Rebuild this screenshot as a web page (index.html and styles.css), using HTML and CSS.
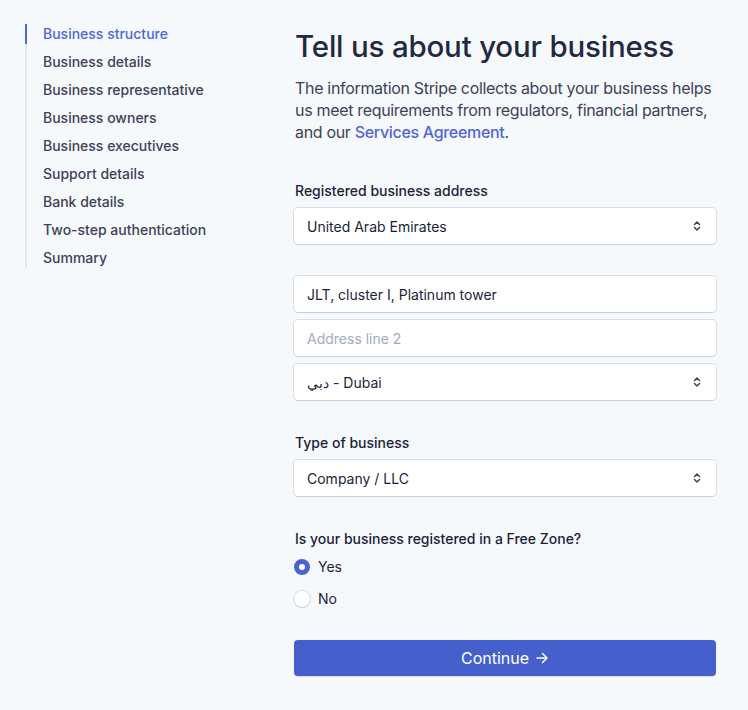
FILE: index.html
```html
<!DOCTYPE html>
<html>
<head>
<meta charset="utf-8">
<link rel="stylesheet" href="styles.css">
</head>
<body>
<div class="page">
  <nav class="steps">
    <a class="step active">Business structure</a>
    <a class="step">Business details</a>
    <a class="step">Business representative</a>
    <a class="step">Business owners</a>
    <a class="step">Business executives</a>
    <a class="step">Support details</a>
    <a class="step">Bank details</a>
    <a class="step">Two-step authentication</a>
    <a class="step">Summary</a>
  </nav>
  <main class="form">
    <h1 class="title">Tell us about your business</h1>
    <p class="intro">The information Stripe collects about your business helps us meet requirements from regulators, financial partners, and our <a class="link">Services Agreement</a>.</p>

    <div class="field">
      <div class="label">Registered business address</div>
      <div class="control select"><span>United Arab Emirates</span><svg class="chev" width="10" height="14" viewBox="0 0 10 14"><path d="M2.5 5.5 L5 3 L7.5 5.5 M2.5 8.5 L5 11 L7.5 8.5" fill="none" stroke="#3c4257" stroke-width="1.5" stroke-linecap="round" stroke-linejoin="round"/></svg></div>
    </div>

    <div class="address">
      <div class="control"><span>JLT, cluster I, Platinum tower</span></div>
      <div class="control"><span class="placeholder">Address line 2</span></div>
      <div class="control select"><span>دبي - Dubai</span><svg class="chev" width="10" height="14" viewBox="0 0 10 14"><path d="M2.5 5.5 L5 3 L7.5 5.5 M2.5 8.5 L5 11 L7.5 8.5" fill="none" stroke="#3c4257" stroke-width="1.5" stroke-linecap="round" stroke-linejoin="round"/></svg></div>
    </div>

    <div class="field type">
      <div class="label">Type of business</div>
      <div class="control select"><span>Company / LLC</span><svg class="chev" width="10" height="14" viewBox="0 0 10 14"><path d="M2.5 5.5 L5 3 L7.5 5.5 M2.5 8.5 L5 11 L7.5 8.5" fill="none" stroke="#3c4257" stroke-width="1.5" stroke-linecap="round" stroke-linejoin="round"/></svg></div>
    </div>

    <div class="field zone">
      <div class="label">Is your business registered in a Free Zone?</div>
      <div class="radios">
        <label class="radio"><span class="dot checked"></span>Yes</label>
        <label class="radio"><span class="dot"></span>No</label>
      </div>
    </div>

    <button class="continue">Continue <svg width="14" height="14" viewBox="0 0 14 14"><path d="M2 7 H12 M7.5 2.5 L12 7 L7.5 11.5" fill="none" stroke="#fff" stroke-width="1.5" stroke-linecap="round" stroke-linejoin="round"/></svg></button>
  </main>
</div>
</body>
</html>
```
FILE: styles.css
```css
* { box-sizing: border-box; }
html, body { margin: 0; padding: 0; }
body {
  background: #f6f9fc;
  font-family: Inter, "Noto Sans", sans-serif;
  color: #1a1f36;
  width: 748px;
  height: 710px;
  overflow: hidden;
}
.page {
  display: flex;
  padding: 24px 0 0 25px;
}
.steps {
  width: 269px;
  flex: none;
  display: flex;
  flex-direction: column;
  align-self: flex-start;
  border-left: 2px solid #e3e8ee;
}
.step {
  display: block;
  font-size: 14px;
  line-height: 20px;
  padding: 0 0 8px 16px;
  color: #3c4257;
  font-weight: 500;
  margin-left: -2px;
  border-left: 2px solid transparent;
}
.step:last-child { padding-bottom: 0; }
.step.active {
  color: #4f66d6;
  border-left-color: #4f66d6;
  height: 20px;
  padding-bottom: 0;
  margin-bottom: 8px;
}
.form {
  width: 422px;
  display: flex;
  flex-direction: column;
}
.title {
  margin: 4px 0 0 1px;
  font-size: 29.5px;
  line-height: 36px;
  font-weight: 500;
  color: #232940;
  letter-spacing: -0.2px;
}
.intro {
  margin: 13px 0 0 1px;
  font-size: 16px;
  line-height: 22px;
  color: #3c4257;
  letter-spacing: -0.32px;
}
.link { color: #4f66d6; font-weight: 500; }
.field { display: flex; flex-direction: column; }
.label {
  font-size: 14px;
  line-height: 20px;
  font-weight: 500;
  color: #1a1f36;
  margin: 0 0 7px 1px;
}
.intro + .field { margin-top: 38px; }
.control {
  height: 36px;
  background: #fff;
  border-radius: 4px;
  box-shadow: 0 0 0 1px rgba(60,66,87,0.14), 0 1px 1px rgba(0,0,0,0.08);
  display: flex;
  align-items: center;
  padding: 0 12px 0 13px;
  font-size: 14px;
  color: #1a1f36;
}
.control span { flex: 1; }
.placeholder { color: #a3acb9; }
.chev { flex: none; margin-right: 2px; }
.address {
  margin-top: 32px;
  display: flex;
  flex-direction: column;
  gap: 8px;
}
.type { margin-top: 33px; }
.zone { margin-top: 33px; }
.zone .label { margin-bottom: 8px; }
.radios { display: flex; flex-direction: column; gap: 12px; }
.radio {
  display: flex;
  align-items: center;
  gap: 8px;
  font-size: 14px;
  line-height: 20px;
  color: #1a1f36;
  font-weight: 400;
}
.dot {
  width: 16px;
  height: 16px;
  border-radius: 50%;
  background: #fff;
  box-shadow: 0 0 0 1px rgba(60,66,87,0.18), 0 1px 1px rgba(0,0,0,0.08);
}
.dot.checked {
  background: #fff;
  border: 5px solid #4a63d2;
  box-shadow: none;
}
.continue {
  margin-top: 31px;
  height: 36px;
  width: 422px;
  border: none;
  border-radius: 4px;
  background: #4560cc;
  color: #fff;
  font-family: Inter, sans-serif;
  font-size: 16px;
  font-weight: 400;
  display: flex;
  align-items: center;
  justify-content: center;
  gap: 6px;
  box-shadow: 0 1px 1px rgba(0,0,0,0.12);
}
```
